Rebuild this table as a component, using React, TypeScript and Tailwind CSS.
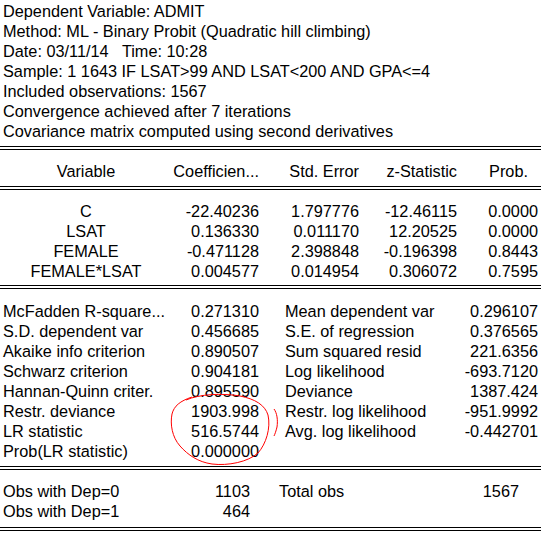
const header = [
  "Dependent Variable: ADMIT",
  "Method: ML - Binary Probit (Quadratic hill climbing)",
  "Date: 03/11/14   Time: 10:28",
  "Sample: 1 1643 IF LSAT>99 AND LSAT<200 AND GPA<=4",
  "Included observations: 1567",
  "Convergence achieved after 7 iterations",
  "Covariance matrix computed using second derivatives",
];

const coefs = [
  ["C", "-22.40236", "1.797776", "-12.46115", "0.0000"],
  ["LSAT", "0.136330", "0.011170", "12.20525", "0.0000"],
  ["FEMALE", "-0.471128", "2.398848", "-0.196398", "0.8443"],
  ["FEMALE*LSAT", "0.004577", "0.014954", "0.306072", "0.7595"],
];

const stats = [
  ["McFadden R-square...", "0.271310", "Mean dependent var", "0.296107"],
  ["S.D. dependent var", "0.456685", "S.E. of regression", "0.376565"],
  ["Akaike info criterion", "0.890507", "Sum squared resid", "221.6356"],
  ["Schwarz criterion", "0.904181", "Log likelihood", "-693.7120"],
  ["Hannan-Quinn criter.", "0.895590", "Deviance", "1387.424"],
  ["Restr. deviance", "1903.998", "Restr. log likelihood", "-951.9992"],
  ["LR statistic", "516.5744", "Avg. log likelihood", "-0.442701"],
  ["Prob(LR statistic)", "0.000000", "", ""],
];

function Rule({ className = "" }: { className?: string }) {
  return <div className={`h-[4px] border-y border-black ${className}`} />;
}

export default function App() {
  return (
    <div className="relative w-[541px] h-[538px] overflow-hidden bg-white text-black text-[16.3px] leading-[20px] font-['Liberation_Sans',Arial,sans-serif] whitespace-pre">
      <div className="pt-[1px] pl-[3px]">
        {header.map((line) => (
          <div key={line}>{line}</div>
        ))}
      </div>

      <Rule className="mt-[5px]" />

      {/* coefficient header */}
      <div className="grid grid-cols-[172px_90px_100px_98px_81px] mt-[11px]">
        <div className="text-center">Variable</div>
        <div className="text-right pr-[3px]">Coefficien...</div>
        <div className="text-right pr-[3px]">Std. Error</div>
        <div className="text-right pr-[3px]">z-Statistic</div>
        <div className="text-right pr-[13px]">Prob.</div>
      </div>

      <Rule className="mt-[5px]" />

      <div className="mt-[11px]">
        {coefs.map((row) => (
          <div key={row[0]} className="grid grid-cols-[172px_90px_100px_98px_81px]">
            <div className="text-center">{row[0]}</div>
            <div className="text-right pr-[3px]">{row[1]}</div>
            <div className="text-right pr-[3px]">{row[2]}</div>
            <div className="text-right pr-[3px]">{row[3]}</div>
            <div className="text-right pr-[3px]">{row[4]}</div>
          </div>
        ))}
      </div>

      <Rule className="mt-[4px]" />

      <div className="mt-[12px]">
        {stats.map((row) => (
          <div key={row[0]} className="grid grid-cols-[262px_279px]">
            <div className="flex justify-between pl-[3px] pr-[3px]">
              <span>{row[0]}</span>
              <span>{row[1]}</span>
            </div>
            <div className="flex justify-between pl-[23px] pr-[3px]">
              <span>{row[2]}</span>
              <span>{row[3]}</span>
            </div>
          </div>
        ))}
      </div>

      <Rule className="mt-[5px]" />

      <div className="mt-[11px]">
        <div className="grid grid-cols-[253px_288px]">
          <div className="flex justify-between pl-[3px] pr-[3px]">
            <span>Obs with Dep=0</span>
            <span>1103</span>
          </div>
          <div className="flex justify-between pl-[26px] pr-[22px]">
            <span>Total obs</span>
            <span>1567</span>
          </div>
        </div>
        <div className="grid grid-cols-[253px_288px]">
          <div className="flex justify-between pl-[3px] pr-[3px]">
            <span>Obs with Dep=1</span>
            <span>464</span>
          </div>
          <div />
        </div>
      </div>

      <Rule className="mt-[6px]" />

      {/* hand-drawn red circle around the LR values */}
      <svg
        className="absolute left-0 top-0 pointer-events-none"
        width="541"
        height="538"
        viewBox="0 0 541 538"
        fill="none"
      >
        <path
          d="M186 400 C200 394 222 393 240 396 C255 399 265 405 268 415 C271 428 266 444 258 453 C248 462 228 466 212 464 C198 462 188 455 180 446 C172 437 170 424 172 414 C174 406 180 401 192 397"
          stroke="#ff0000"
          strokeWidth="1"
        />
        <path d="M274 409 C277 413 278 420 277 427 C276 431 275 434 274 436" stroke="#ff0000" strokeWidth="1" />
      </svg>
    </div>
  );
}
